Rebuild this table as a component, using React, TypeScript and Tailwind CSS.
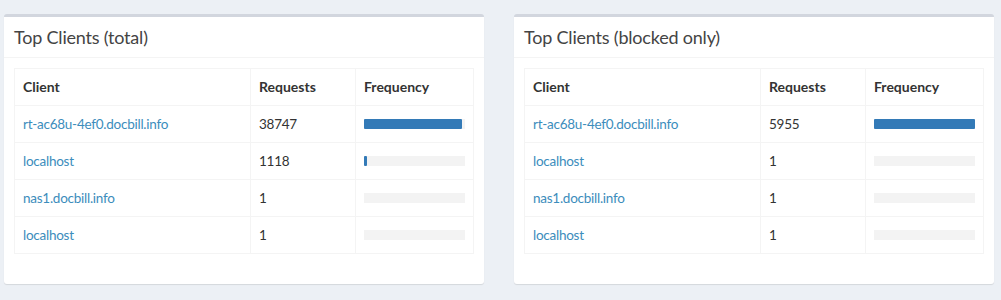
import React from "react";

type Row = { name: string; count: number; pct: number };

const total: Row[] = [
  { name: "rt-ac68u-4ef0.docbill.info", count: 38747, pct: 97.2 },
  { name: "localhost", count: 1118, pct: 2.8 },
  { name: "nas1.docbill.info", count: 1, pct: 0 },
  { name: "localhost", count: 1, pct: 0 },
];

const blocked: Row[] = [
  { name: "rt-ac68u-4ef0.docbill.info", count: 5955, pct: 99.95 },
  { name: "localhost", count: 1, pct: 0 },
  { name: "nas1.docbill.info", count: 1, pct: 0 },
  { name: "localhost", count: 1, pct: 0 },
];

function Box({ title, rows }: { title: string; rows: Row[] }) {
  return (
    <div className="bg-white border-t-[3px] border-[#d2d6de] rounded-[3px] shadow-[0_1px_1px_rgba(0,0,0,0.1)] w-[480px]">
      <div className="px-[10px] py-[10px] border-b border-[#f4f4f4]">
        <h3 className="text-[18px] leading-[20px] text-[#444] m-0 tracking-[-0.2px]">{title}</h3>
      </div>
      <div className="p-[10px]">
        <table className="w-full border-collapse border border-[#f4f4f4] mb-[20px] text-[14px] leading-[20px] text-[#333]">
          <thead>
            <tr>
              <th className="text-left font-bold p-2 border border-[#f4f4f4] w-[236px]">Client</th>
              <th className="text-left font-bold p-2 border border-[#f4f4f4] w-[105px]">Requests</th>
              <th className="text-left font-bold p-2 border border-[#f4f4f4]">Frequency</th>
            </tr>
          </thead>
          <tbody className="text-[13.5px] tracking-[-0.25px]">
            {rows.map((r, i) => (
              <tr key={i}>
                <td className="p-2 border border-[#f4f4f4] text-[#3c8dbc]">{r.name}</td>
                <td className="p-2 border border-[#f4f4f4]">{r.count}</td>
                <td className="p-2 border border-[#f4f4f4]">
                  <div className="h-[10px] bg-[#f3f3f3] w-[101px] flex">
                    <div className="h-full bg-[#337ab7] rounded-[1px]" style={{ width: `${r.pct}%` }} />
                  </div>
                </td>
              </tr>
            ))}
          </tbody>
        </table>
      </div>
    </div>
  );
}

export default function App() {
  return (
    <div className="w-[1001px] h-[300px] bg-[#ecf0f5] pt-[14px] pl-[4px] flex gap-[30px] items-start" style={{ fontFamily: "Lato, 'Open Sans', sans-serif" }}>
      <Box title="Top Clients (total)" rows={total} />
      <Box title="Top Clients (blocked only)" rows={blocked} />
    </div>
  );
}
